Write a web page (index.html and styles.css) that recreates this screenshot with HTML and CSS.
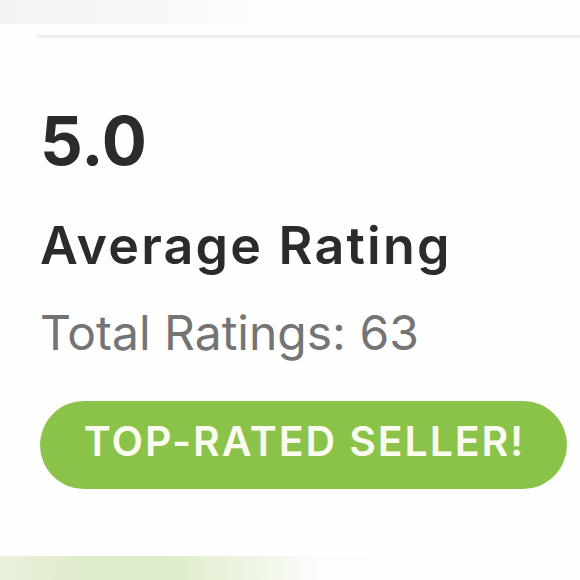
FILE: index.html
```html
<!DOCTYPE html>
<html lang="en">
<head>
    <meta charset="UTF-8">
    <meta name="viewport" content="width=device-width, initial-scale=1.0">
    <title>Seller Rating</title>
    <link rel="stylesheet" href="styles.css">
</head>
<body>

<div class="top-strip"></div>
<div class="divider"></div>

<div class="rating-card">
    <div class="score">5.0</div>
    <div class="score-label">Average Rating</div>
    <div class="total">Total Ratings: 63</div>
    <div class="badge">TOP-RATED SELLER!</div>
</div>

<div class="bottom-strip"></div>

</body>
</html>
```

FILE: styles.css
```css
body {
    margin: 0;
    height: 580px;
    overflow: hidden;
    background-color: #fefefe;
    font-family: Inter, Lato, sans-serif;
    color: #2b2b2b;
    display: flex;
    flex-direction: column;
}
.top-strip {
    height: 24px;
    background: linear-gradient(to right, #f3f3f3 0%, #f6f6f5 20%, #fdfdfc 45%, #fefefe 100%);
}
.divider {
    height: 3px;
    margin: 11px 0 0 37px;
    background-color: #efefeb;
}
.rating-card {
    flex: 1;
    padding: 0 13px 0 40px;
}
.score {
    font-size: 67px;
    line-height: 1;
    font-weight: 700;
    margin-top: 69px;
}
.score-label {
    font-size: 52px;
    line-height: 1;
    font-weight: 600;
    letter-spacing: 2.2px;
    margin-top: 46px;
}
.total {
    font-size: 48px;
    line-height: 1;
    color: #747474;
    margin-top: 37px;
}
.badge {
    margin-top: 44px;
    height: 80px;
    line-height: 80px;
    padding: 0 0 8px 2px;
    border-radius: 44px;
    background-color: #8bc34a;
    color: #fbfcf0;
    font-size: 41px;
    font-weight: 600;
    letter-spacing: 1.9px;
    text-align: center;
}
.bottom-strip {
    height: 24px;
    background: linear-gradient(to right, #e9f0dc 0%, #deecc9 15%, #dfedca 30%, #eff6e8 45%, #fdfdfb 55%, #fefefe 100%);
}
```
